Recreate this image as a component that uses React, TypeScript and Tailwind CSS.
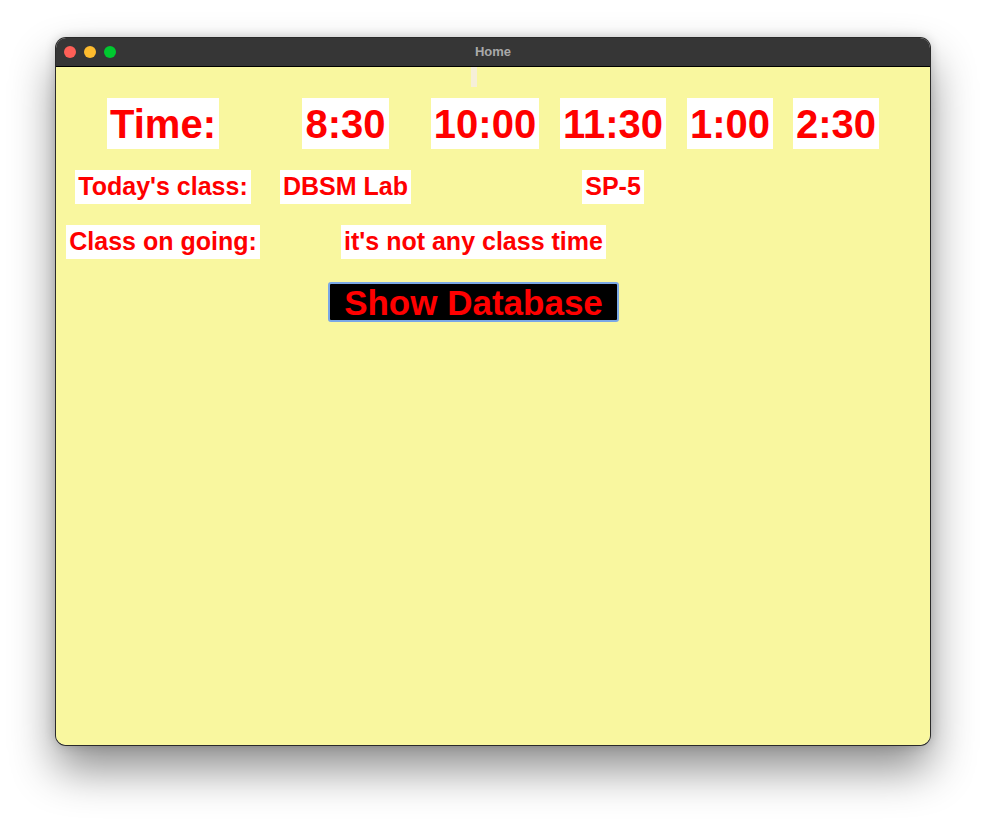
import React from "react";

const times = ["8:30", "10:00", "11:30", "1:00", "2:30"];

function Cell({ text, size, h, className = "" }: { text: string; size: string; h: string; className?: string }) {
    return (
        <div className={`justify-self-center bg-white px-[3px] flex items-center whitespace-nowrap font-bold text-[#ff0000] ${size} ${h} ${className}`}>
            {text}
        </div>
    );
}

function App() {
    return (
        <div className="w-[986px] h-[819px] bg-white pt-[38px] pl-[56px] overflow-hidden" style={{ fontFamily: '"Liberation Sans", Arial, sans-serif' }}>
            <div className="w-[874px] h-[707px] rounded-[10px] overflow-hidden ring-1 ring-[#2a2a2a] shadow-[0_24px_45px_rgba(0,0,0,0.45),0_0_12px_rgba(0,0,0,0.2)] flex flex-col">
                {/* title bar */}
                <div className="h-[29px] bg-[#363636] border-b border-black relative flex items-center justify-center shrink-0">
                    <div className="absolute left-[8px] top-[8px] flex gap-[8px]">
                        <span className="w-[12px] h-[12px] rounded-full bg-[#fe5f57]" />
                        <span className="w-[12px] h-[12px] rounded-full bg-[#febc2e]" />
                        <span className="w-[12px] h-[12px] rounded-full bg-[#00c92f]" />
                    </div>
                    <span className="text-[13px] font-bold text-[#a9a9a9] -mt-[1px]">Home</span>
                </div>
                {/* body */}
                <div className="flex-1 bg-[#f9f79f]">
                    <div className="grid grid-cols-[214px_151px_128px_128px_106px_106px] items-start">
                        <div className="col-start-2 col-span-3 justify-self-center w-[6px] h-[20px] bg-[#f6efd8]" />

                        <Cell text="Time:" size="text-[40px]" h="h-[51px] mt-[11px]" className="col-start-1" />
                        {times.map((t) => (
                            <Cell key={t} text={t} size="text-[40px]" h="h-[51px] mt-[11px]" />
                        ))}

                        <Cell text="Today's class:" size="text-[25px]" h="h-[34px] mt-[21px]" className="col-start-1" />
                        <Cell text="DBSM Lab" size="text-[25px]" h="h-[34px] mt-[21px]" />
                        <div />
                        <Cell text="SP-5" size="text-[25px]" h="h-[34px] mt-[21px]" />
                        <div />
                        <div />

                        <Cell text="Class on going:" size="text-[25px]" h="h-[34px] mt-[21px]" className="col-start-1" />
                        <Cell text="it's not any class time" size="text-[25px]" h="h-[34px] mt-[21px]" className="col-span-3" />

                        <button className="col-start-2 col-span-3 justify-self-center mt-[23px] w-[291px] h-[40px] bg-black border-2 border-solid border-[#7aa8e6] rounded-[3px] text-[#ff0000] font-bold text-[35px] leading-none flex items-center justify-center">
                            Show Database
                        </button>
                    </div>
                </div>
            </div>
        </div>
    );
}

export default App;
